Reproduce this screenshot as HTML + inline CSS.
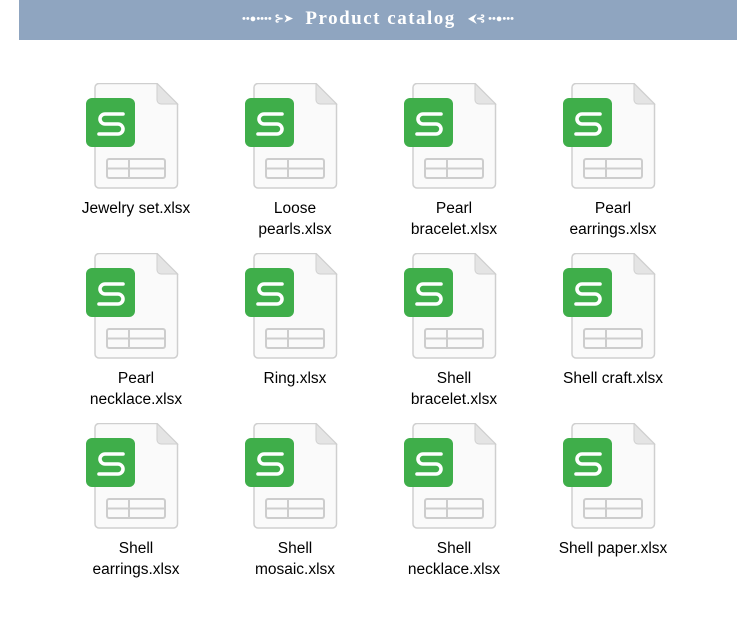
<!DOCTYPE html>
<html><head><meta charset="utf-8"><style>
body{margin:0;width:750px;height:622px;background:#fff;position:relative;overflow:hidden;font-family:"Liberation Sans","DejaVu Sans",sans-serif}
.bar{position:absolute;left:19px;top:0;width:718px;height:40px;background:#8fa5c0;color:#fff;text-align:center;font-family:"Liberation Serif",serif;font-weight:bold;font-size:19px;letter-spacing:1.5px;line-height:38px}
.bar span{font-size:11px;letter-spacing:0;vertical-align:2px}
.it{position:absolute;width:150px}
.it svg{position:absolute;left:25px;top:0}
.it div{position:absolute;top:115px;left:-5px;width:160px;text-align:center;font-size:15.5px;line-height:21px;color:#000}
</style></head><body>
<div class="bar"><span>••●•••• ⊱➤</span>&nbsp;&nbsp;Product catalog&nbsp;&nbsp;<span>⮜⊰ ••●•••</span></div>
<svg width="0" height="0" style="position:absolute"><defs><g id="ic">
<path d="M13 0.5 H71 L91.5 21 V101 a4 4 0 0 1 -4 4 H13 a4 4 0 0 1 -4 -4 V4.5 a4 4 0 0 1 4 -4z" fill="#fafafa" stroke="#cfcfcf" stroke-width="1.5"/>
<path d="M71 0.5 V17 a4 4 0 0 0 4 4 H91.5z" fill="#e4e4e4" stroke="#cfcfcf" stroke-width="1"/>
<rect x="0" y="15" width="49" height="49" rx="6" fill="#3fae4a"/>
<path d="M37 31 H19 a5 5 0 0 0 0 10 H32 a5 5 0 0 1 0 10 H13" fill="none" stroke="#fff" stroke-width="3.6" stroke-linecap="round"/>
<rect x="21" y="76" width="58" height="19" rx="2" fill="none" stroke="#cdcdcd" stroke-width="2"/>
<path d="M21 85.5 H79 M43 76 V95" stroke="#cdcdcd" stroke-width="2"/>
</g></defs></svg>

<div class="it" style="left:61px;top:83px"><svg width="100" height="108"><use href="#ic"/></svg><div>Jewelry set.xlsx</div></div>
<div class="it" style="left:220px;top:83px"><svg width="100" height="108"><use href="#ic"/></svg><div>Loose<br>pearls.xlsx</div></div>
<div class="it" style="left:379px;top:83px"><svg width="100" height="108"><use href="#ic"/></svg><div>Pearl<br>bracelet.xlsx</div></div>
<div class="it" style="left:538px;top:83px"><svg width="100" height="108"><use href="#ic"/></svg><div>Pearl<br>earrings.xlsx</div></div>

<div class="it" style="left:61px;top:253px"><svg width="100" height="108"><use href="#ic"/></svg><div>Pearl<br>necklace.xlsx</div></div>
<div class="it" style="left:220px;top:253px"><svg width="100" height="108"><use href="#ic"/></svg><div>Ring.xlsx</div></div>
<div class="it" style="left:379px;top:253px"><svg width="100" height="108"><use href="#ic"/></svg><div>Shell<br>bracelet.xlsx</div></div>
<div class="it" style="left:538px;top:253px"><svg width="100" height="108"><use href="#ic"/></svg><div>Shell craft.xlsx</div></div>

<div class="it" style="left:61px;top:423px"><svg width="100" height="108"><use href="#ic"/></svg><div>Shell<br>earrings.xlsx</div></div>
<div class="it" style="left:220px;top:423px"><svg width="100" height="108"><use href="#ic"/></svg><div>Shell<br>mosaic.xlsx</div></div>
<div class="it" style="left:379px;top:423px"><svg width="100" height="108"><use href="#ic"/></svg><div>Shell<br>necklace.xlsx</div></div>
<div class="it" style="left:538px;top:423px"><svg width="100" height="108"><use href="#ic"/></svg><div>Shell paper.xlsx</div></div>
</body></html>
